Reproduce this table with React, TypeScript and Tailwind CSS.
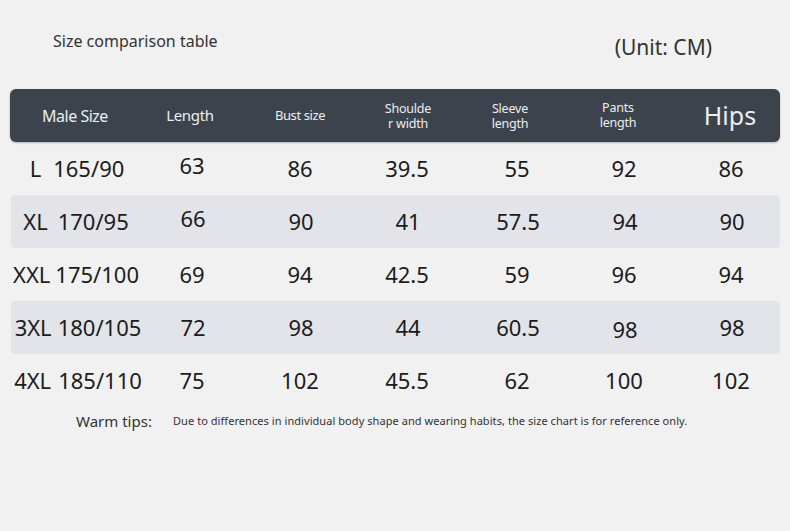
import React from "react";

const rows = [
  ["L", "165/90", "63", "86", "39.5", "55", "92", "86"],
  ["XL", "170/95", "66", "90", "41", "57.5", "94", "90"],
  ["XXL", "175/100", "69", "94", "42.5", "59", "96", "94"],
  ["3XL", "180/105", "72", "98", "44", "60.5", "98", "98"],
  ["4XL", "185/110", "75", "102", "45.5", "62", "100", "102"],
];

const firstCell = [
  "pl-[4px] gap-[12px]",
  "pl-[0px] gap-[10px]",
  "pl-[2px] gap-[5px]",
  "pl-[4px] gap-[6px]",
  "pl-[6px] gap-[7px]",
];

const cols = "grid grid-cols-[130px_100px_120px_96px_114px_106px_104px]";

function Two({ a, b, className = "" }: { a: string; b: string; className?: string }) {
  return (
    <div className={`flex flex-col items-center text-[12.5px] tracking-[-0.2px] ${className}`}>
      <span className="block leading-[15px]">{a}</span>
      <span className="block leading-[15px]">{b}</span>
    </div>
  );
}

export default function App() {
  return (
    <div
      className="w-[790px] h-[531px] bg-[#f1f1f1] text-[#1c1c1c] overflow-hidden"
      style={{ fontFamily: '"Noto Sans", "Open Sans", sans-serif' }}
    >
      <div className="flex items-end justify-between pl-[53px] pr-[78px] pt-[31px] h-[62px]">
        <div className="text-[16px] text-[#333] leading-none pb-[13px]">Size comparison table</div>
        <div className="text-[21px] text-[#333] leading-none pb-[4px]">(Unit: CM)</div>
      </div>
      <div className="mx-[10px] mt-[27px]">
        <div className={`${cols} h-[53px] items-center rounded-[6px] bg-[#3c434c] text-[#eceef0] text-center shadow-[0_1px_2px_rgba(0,0,0,0.25)]`}>
          <div className="text-[16px] tracking-[-0.5px]">Male Size</div>
          <div className="text-[15px] tracking-[-0.3px]">Length</div>
          <div className="text-[13px] tracking-[-0.4px]">Bust size</div>
          <Two a="Shoulde" b="r width" />
          <Two a="Sleeve" b="length" className="pr-[6px]" />
          <Two a="Pants" b="length" className="pr-[10px] pb-[2px]" />
          <div className="text-[25px] pl-[4px]">Hips</div>
        </div>
        {rows.map((r, i) => (
          <div
            key={i}
            className={`${cols} h-[53px] items-center text-center text-[22px] ${i % 2 === 1 ? "bg-[#e2e4e9] rounded-[4px] ml-[1px]" : ""}`}
          >
            <div className={`flex justify-center ${firstCell[i]}`}>
              <span>{r[0]}</span>
              <span>{r[1]}</span>
            </div>
            <div className={i < 2 ? "-translate-y-[3px] pl-[4px]" : "pl-[4px]"}>{r[2]}</div>
            <div>{r[3]}</div>
            <div className="pr-[2px]">{r[4]}</div>
            <div className="pl-[8px]">{r[5]}</div>
            <div className={i === 3 ? "translate-y-[2px] pl-[2px]" : "pl-[2px]"}>{r[6]}</div>
            <div className="pl-[6px]">{r[7]}</div>
          </div>
        ))}
      </div>
      <div className="flex items-center pl-[76px] mt-[3px]">
        <span className="text-[15px] text-[#333] w-[97px]">Warm tips:</span>
        <span className="text-[11px] text-[#333] tracking-[0.06px]">
          Due to differences in individual body shape and wearing habits, the size chart is for reference only.
        </span>
      </div>
    </div>
  );
}
